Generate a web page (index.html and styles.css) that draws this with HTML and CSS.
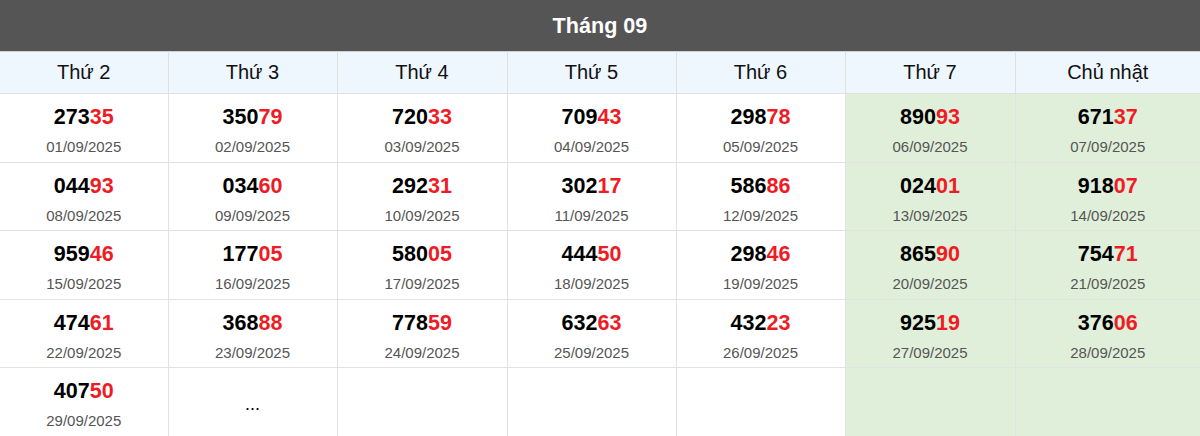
FILE: index.html
```html
<!DOCTYPE html>
<html lang="vi">
<head>
<meta charset="utf-8">
<title>Tháng 09</title>
<link rel="stylesheet" href="styles.css">
</head>
<body>
<div class="cal">
  <div class="title">Tháng 09</div>
  <table class="grid">
    <colgroup>
      <col class="c1"><col class="c2"><col class="c3"><col class="c4"><col class="c5"><col class="c6"><col class="c7">
    </colgroup>
    <thead>
      <tr><th>Thứ 2</th><th>Thứ 3</th><th>Thứ 4</th><th>Thứ 5</th><th>Thứ 6</th><th>Thứ 7</th><th>Chủ nhật</th></tr>
    </thead>
    <tbody>
      <tr>
        <td><div class="num">273<span class="hi">35</span></div><div class="date">01/09/2025</div></td>
        <td><div class="num">350<span class="hi">79</span></div><div class="date">02/09/2025</div></td>
        <td><div class="num">720<span class="hi">33</span></div><div class="date">03/09/2025</div></td>
        <td><div class="num">709<span class="hi">43</span></div><div class="date">04/09/2025</div></td>
        <td><div class="num">298<span class="hi">78</span></div><div class="date">05/09/2025</div></td>
        <td class="we"><div class="num">890<span class="hi">93</span></div><div class="date">06/09/2025</div></td>
        <td class="we"><div class="num">671<span class="hi">37</span></div><div class="date">07/09/2025</div></td>
      </tr>
      <tr>
        <td><div class="num">044<span class="hi">93</span></div><div class="date">08/09/2025</div></td>
        <td><div class="num">034<span class="hi">60</span></div><div class="date">09/09/2025</div></td>
        <td><div class="num">292<span class="hi">31</span></div><div class="date">10/09/2025</div></td>
        <td><div class="num">302<span class="hi">17</span></div><div class="date">11/09/2025</div></td>
        <td><div class="num">586<span class="hi">86</span></div><div class="date">12/09/2025</div></td>
        <td class="we"><div class="num">024<span class="hi">01</span></div><div class="date">13/09/2025</div></td>
        <td class="we"><div class="num">918<span class="hi">07</span></div><div class="date">14/09/2025</div></td>
      </tr>
      <tr>
        <td><div class="num">959<span class="hi">46</span></div><div class="date">15/09/2025</div></td>
        <td><div class="num">177<span class="hi">05</span></div><div class="date">16/09/2025</div></td>
        <td><div class="num">580<span class="hi">05</span></div><div class="date">17/09/2025</div></td>
        <td><div class="num">444<span class="hi">50</span></div><div class="date">18/09/2025</div></td>
        <td><div class="num">298<span class="hi">46</span></div><div class="date">19/09/2025</div></td>
        <td class="we"><div class="num">865<span class="hi">90</span></div><div class="date">20/09/2025</div></td>
        <td class="we"><div class="num">754<span class="hi">71</span></div><div class="date">21/09/2025</div></td>
      </tr>
      <tr>
        <td><div class="num">474<span class="hi">61</span></div><div class="date">22/09/2025</div></td>
        <td><div class="num">368<span class="hi">88</span></div><div class="date">23/09/2025</div></td>
        <td><div class="num">778<span class="hi">59</span></div><div class="date">24/09/2025</div></td>
        <td><div class="num">632<span class="hi">63</span></div><div class="date">25/09/2025</div></td>
        <td><div class="num">432<span class="hi">23</span></div><div class="date">26/09/2025</div></td>
        <td class="we"><div class="num">925<span class="hi">19</span></div><div class="date">27/09/2025</div></td>
        <td class="we"><div class="num">376<span class="hi">06</span></div><div class="date">28/09/2025</div></td>
      </tr>
      <tr>
        <td><div class="num">407<span class="hi">50</span></div><div class="date">29/09/2025</div></td>
        <td class="mid"><div class="more">...</div></td>
        <td></td>
        <td></td>
        <td></td>
        <td class="we"></td>
        <td class="we"></td>
      </tr>
    </tbody>
  </table>
</div>
</body>
</html>
```

FILE: styles.css
```css
html, body {
  margin: 0;
  padding: 0;
  background: #ffffff;
}

.cal {
  width: 1200px;
  font-family: "Liberation Sans", Arial, sans-serif;
  color: #000;
}

.title {
  height: 51px;
  line-height: 51px;
  background: #555555;
  color: #ffffff;
  text-align: center;
  font-weight: bold;
  font-size: 21.6px;
}

.grid {
  width: 1200px;
  border-collapse: collapse;
  table-layout: fixed;
}

.c1 { width: 168px; }
.c2 { width: 169px; }
.c3 { width: 170px; }
.c4 { width: 169px; }
.c5 { width: 169px; }
.c6 { width: 170px; }
.c7 { width: 185px; }

.grid th {
  height: 41px;
  padding: 0;
  background: #eef6fe;
  font-weight: normal;
  font-size: 20px;
  color: #111;
  border: 1px solid #e0e0e0;
  border-top: 1px solid #cfcfcf;
  text-align: center;
  vertical-align: middle;
}

.grid td {
  height: 68.5px;
  box-sizing: border-box;
  padding: 11px 0 0 0;
  border: 1px solid #e2e2e2;
  text-align: center;
  vertical-align: top;
  background: #ffffff;
}

.grid td.mid {
  padding: 6px 0 0 0;
  vertical-align: middle;
}

.grid th:first-child,
.grid td:first-child { border-left: none; }
.grid th:last-child,
.grid td:last-child { border-right: none; }

.grid td.we {
  background: #e0efda;
}

.num {
  font-weight: bold;
  font-size: 21.5px;
  line-height: 24px;
  color: #000;
}

.hi {
  color: #ee1c25;
}

.date {
  margin-top: 9px;
  font-size: 15px;
  line-height: 18px;
  color: #555;
}

.more {
  font-size: 18px;
  color: #000;
}
```
